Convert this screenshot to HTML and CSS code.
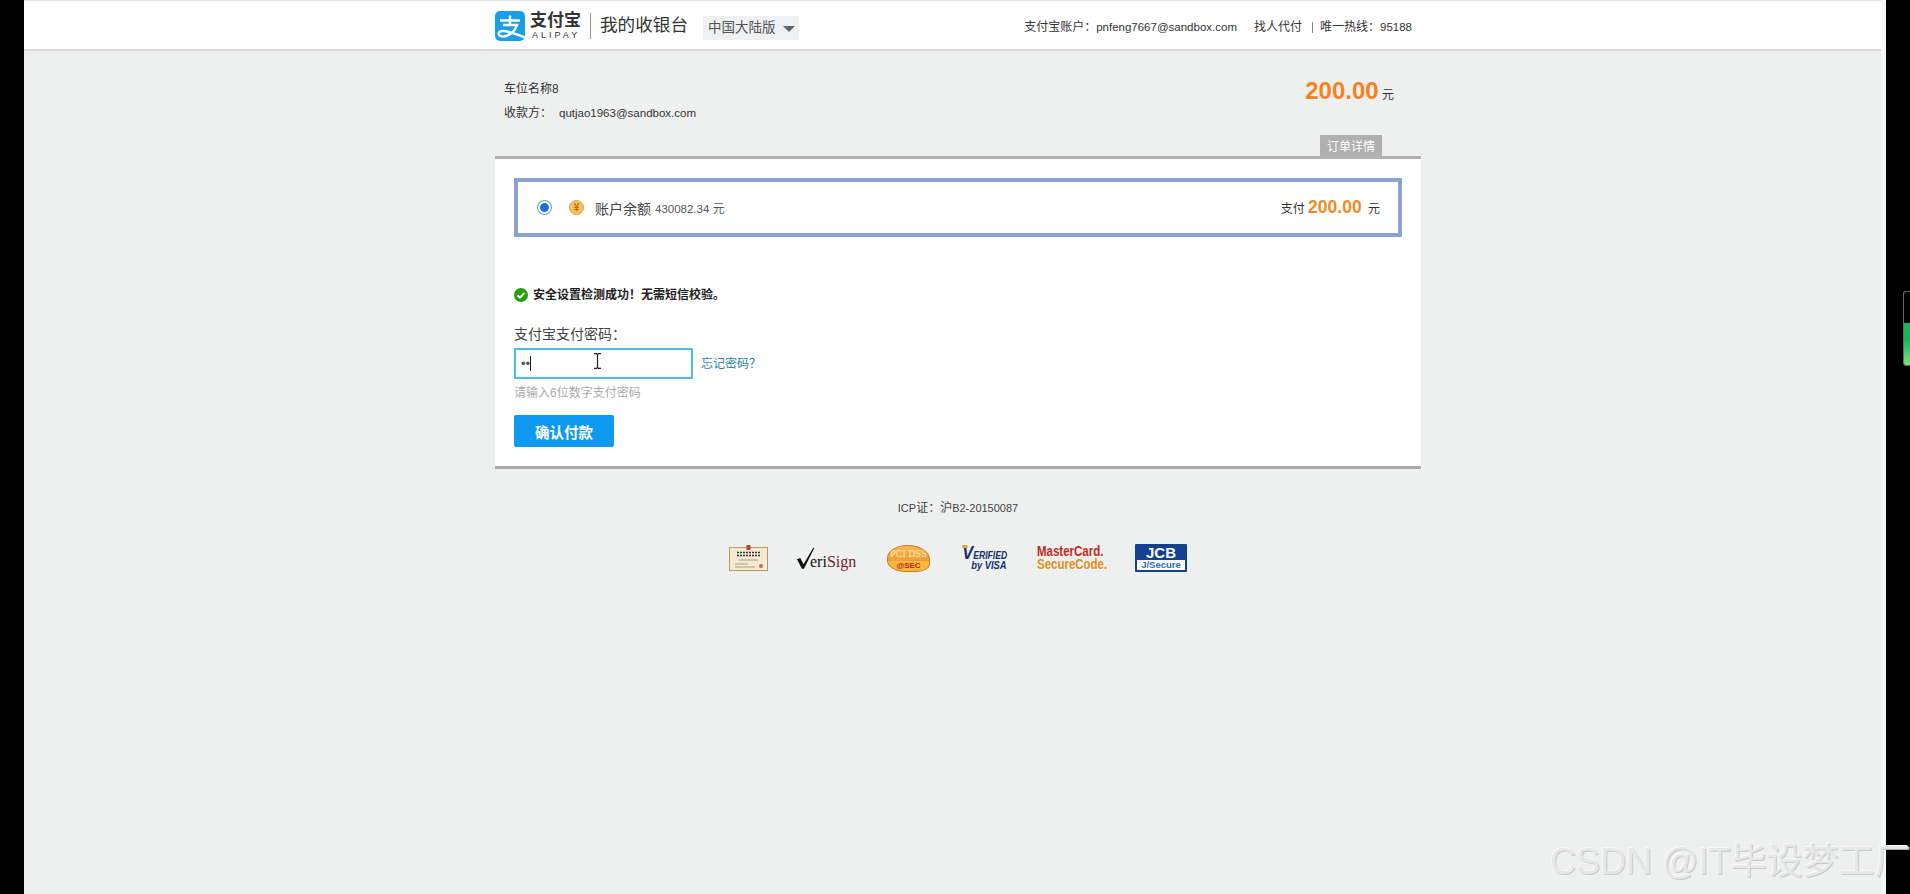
FILE: index.html
```html
<!DOCTYPE html>
<html lang="zh-CN">
<head>
<meta charset="utf-8">
<title>支付宝 我的收银台</title>
<link rel="stylesheet" href="styles.css">
</head>
<body>
<div class="screen">
  <header class="topbar">
    <div class="wrap topbar-in">
      <div class="brand">
        <svg class="logo" viewBox="0 0 30 30" aria-hidden="true">
          <rect width="30" height="30" rx="5" fill="#1a9fe6"/>
          <path d="M5 9.500h20M15 4.500v8.500M8 14h14c-2 6.500-8 11.500-14 11.500c-5.500 0-6-5.500-.5-5.500c6 0 13 2.500 22.500 6.500" fill="none" stroke="#fff" stroke-width="2.400"/>
        </svg>
        <div class="wordmark">
          <div class="wm-cn">支付宝</div>
          <div class="wm-en">ALIPAY</div>
        </div>
        <div class="brand-sep"></div>
        <div class="brand-title">我的收银台</div>
        <div class="region">中国大陆版<span class="caret"></span></div>
      </div>
      <div class="toplinks">
        <span>支付宝账户：<span class="lat">pnfeng7667@sandbox.com</span></span>
        <span class="find">找人代付</span>
        <span class="bar"></span>
        <span>唯一热线：<span class="lat">95188</span></span>
      </div>
    </div>
  </header>

  <main class="wrap">
    <section class="order">
      <div class="order-info">
        <div class="order-name">车位名称8</div>
        <div class="order-payee"><span class="payee-label">收款方：</span><span class="lat">qutjao1963@sandbox.com</span></div>
      </div>
      <div class="order-amount"><b>200.00</b> 元</div>
    </section>
    <div class="tabline"><span class="detail-tab">订单详情</span></div>

    <section class="card">
      <div class="pay-box">
        <div class="pay-left">
          <span class="radio"></span>
          <span class="coin">¥</span>
          <span class="pay-name">账户余额</span>
          <span class="pay-bal"><span class="lat">430082.34</span> 元</span>
        </div>
        <div class="pay-right">支付 <b>200.00</b> <span class="pay-unit">元</span></div>
      </div>

      <div class="secure">
        <svg class="check" viewBox="0 0 14 14" aria-hidden="true">
          <circle cx="7" cy="7" r="7" fill="#22a00e"/>
          <path d="M3.500 7.200l2.500 2.400l4.500-4.700" fill="none" stroke="#fff" stroke-width="2"/>
        </svg>
        <span>安全设置检测成功！无需短信校验。</span>
      </div>

      <div class="pw-label">支付宝支付密码：</div>
      <div class="pw-row">
        <div class="pw-input">
          <span class="dots">••</span><span class="text-caret"></span>
          <svg class="ibeam" viewBox="0 0 9 16" aria-hidden="true">
            <path d="M1 .7h2.500L4.500 1.500L5.500 .7H8M4.500 1.500v13M1 15.300h2.500l1-.8l1 .8H8" fill="none" stroke="#222" stroke-width="1.200"/>
          </svg>
        </div>
        <span class="forgot">忘记密码？</span>
      </div>
      <div class="pw-hint">请输入6位数字支付密码</div>
      <button class="confirm" type="button">确认付款</button>
    </section>

    <footer class="foot">
      <div class="icp"><span class="lat-sm">ICP</span>证：沪<span class="lat-sm">B2-20150087</span></div>
      <div class="badges">
        <div class="badge-cert">
          <svg viewBox="0 0 39 26" aria-hidden="true">
            <rect x=".5" y="2.500" width="38" height="23" fill="#f3ead2" stroke="#b89a62"/>
            <path d="M8 7.500h23M8 10.500h23" stroke="#333" stroke-width="1.400" stroke-dasharray="2 1"/>
            <path d="M10 15h19M6 19h13M6 22h20" stroke="#a99a80"/>
            <rect x="17.500" y="0" width="4" height="5" fill="#b5482c"/>
            <circle cx="32" cy="21" r="2" fill="#c46a50"/>
          </svg>
        </div>
        <div class="badge-vs">
          <svg class="vs-tick" viewBox="0 0 22 27" aria-hidden="true"><path d="M0 14.500l4-1.500l4 7.500L20 0l1 1L8.500 26H6z" fill="#111"/></svg>
          <span class="vs-e">eri</span><span class="vs-s">Sign</span>
        </div>
        <div class="badge-pci">
          <span class="pci-top">PCI DSS</span>
          <span class="pci-bot">@SEC</span>
        </div>
        <div class="badge-visa">
          <span class="v1"><span class="v-big">V</span>ERIFIED</span>
          <span class="v2">by VISA</span>
        </div>
        <div class="badge-mc"><span class="m1">MasterCard.</span><span class="m2">SecureCode.</span></div>
        <div class="badge-jcb"><span class="j1">JCB</span><span class="j2">J/Secure</span></div>
      </div>
    </footer>
  </main>
</div>
<div class="watermark">CSDN @IT毕设梦工厂</div>
<div class="side-meter"><span class="side-fill"></span></div>
</body>
</html>
```

FILE: styles.css
```css
* { box-sizing: border-box; }
html, body { margin: 0; height: 100%; }
body {
  background: #000;
  padding: 0 24px;
  overflow: hidden;
  position: relative;
  font-family: "Liberation Sans", "Noto Sans CJK SC", sans-serif;
  font-size: 12px;
  color: #333;
}
.lat { font-size: 11.500px; }
.lat-sm { font-size: 11px; }
.screen {
  height: 894px;
  background: #eef0ef;
  border-right: 5px solid #f6f7f7;
  position: relative;
  overflow: hidden;
}
.wrap { width: 926px; margin-left: 471px; }
.topbar {
  height: 51px;
  background: #fff;
  border-top: 1px solid #e2e2e2;
  border-bottom: 2px solid #dcdcdc;
}
.topbar-in { display: flex; justify-content: space-between; align-items: flex-start; }
.brand { display: flex; align-items: flex-start; padding-top: 10px; }
.logo { width: 30px; height: 30px; display: block; }
.wordmark { margin-left: 5px; width: 52px; color: #333; }
.wm-cn { font-size: 17px; line-height: 19px; font-weight: 700; white-space: nowrap; }
.wm-en { font-size: 9px; line-height: 10px; letter-spacing: 3px; margin-left: 2px; white-space: nowrap; }
.brand-sep { width: 1px; height: 26px; margin: 2px 0 0 8px; background: #999; }
.brand-title { margin-left: 9px; font-size: 17.600px; line-height: 28px; color: #333; width: 90px; white-space: nowrap; }
.region {
  margin: 5px 0 0 13px;
  width: 96px; height: 24px;
  background: #eef0f1;
  color: #555;
  font-size: 13.500px;
  line-height: 24px;
  padding-left: 5px;
  white-space: nowrap;
  display: flex;
  align-items: center;
}
.caret {
  margin: 2px 0 0 7px;
  width: 0; height: 0;
  border-left: 6px solid transparent;
  border-right: 6px solid transparent;
  border-top: 6px solid #5a6670;
}
.toplinks {
  display: flex;
  align-items: center;
  padding-top: 18px;
  margin-right: 9px;
  line-height: 16px;
  white-space: nowrap;
}
.find { margin-left: 17px; }
.bar { width: 1px; height: 11px; background: #888; margin: 0 7px 0 10px; }

.order { display: flex; justify-content: space-between; height: 84px; padding: 28px 27px 0 9px; }
.order-name { line-height: 20px; }
.order-payee { line-height: 20px; margin-top: 4px; }
.payee-label { display: inline-block; width: 55px; }
.order-amount { margin-top: -3px; color: #333; font-size: 12px; line-height: 30px; }
.order-amount b { color: #f58220; font-size: 24px; }

.tabline { height: 21px; display: flex; justify-content: flex-end; padding-right: 39px; }
.detail-tab {
  width: 62px; height: 21px;
  background: #b0b0b0;
  color: #fff;
  text-align: center;
  line-height: 24px;
}

.card {
  height: 313px;
  background: #fff;
  border-top: 3px solid #b0b0b0;
  border-bottom: 3px solid #a8a8a8;
  padding: 19px 19px 0;
}
.pay-box {
  height: 59px;
  width: 888px;
  border: 4px solid #8aa3cf;
  display: flex;
  justify-content: space-between;
  align-items: center;
  padding: 0 18px 0 20px;
}
.pay-left { display: flex; align-items: center; }
.radio {
  width: 13px; height: 13px;
  border-radius: 50%;
  background: #1a73dc;
  border: 2px solid #fff;
  box-shadow: 0 0 0 1px #6a9ad6;
}
.coin {
  margin-left: 18px;
  width: 15px; height: 15px;
  border-radius: 50%;
  background: #f7c35f;
  border: 1px solid #e89a35;
  color: #bd6c18;
  font-size: 10px;
  font-weight: 700;
  line-height: 13px;
  text-align: center;
}
.pay-name { margin-left: 11px; font-size: 14px; color: #444; }
.pay-bal { margin-left: 4px; color: #555; }
.pay-right { color: #333; }
.pay-right b { color: #f08a24; font-size: 17.500px; }
.pay-unit { margin-left: 3px; }

.secure { display: flex; align-items: center; margin-top: 50px; font-weight: 700; color: #222; line-height: 16px; }
.check { width: 14px; height: 14px; margin-right: 5px; }
.pw-label { margin-top: 21px; font-size: 14px; line-height: 20px; color: #444; }
.pw-row { display: flex; align-items: center; margin-top: 4px; }
.pw-input {
  width: 179px; height: 31px;
  background: #fff;
  border: 2px solid #4dbde0;
  padding-left: 5px;
  display: flex;
  align-items: center;
  position: relative;
}
.dots { font-size: 13px; color: #555; }
.text-caret { width: 1px; height: 15px; background: #222; }
.ibeam { position: absolute; left: 77px; top: 3px; width: 9px; height: 16px; }
.forgot { margin: 0 0 3px 8px; color: #1f7f9f; }
.pw-hint { margin-top: 6px; color: #aaa; line-height: 16px; }
.confirm {
  display: block;
  margin-top: 14px;
  width: 100px; height: 32px;
  border: 0;
  border-radius: 2px;
  background: #0e9bef;
  color: #fff;
  font: 700 14.500px "Liberation Sans", "Noto Sans CJK SC", sans-serif;
}

.foot { text-align: center; padding-top: 31px; }
.icp { line-height: 16px; color: #444; }
.badges {
  display: flex;
  align-items: center;
  margin: 27px 0 0 234px;
  height: 30px;
  text-align: left;
}
.badge-cert { width: 39px; height: 26px; }
.badge-cert svg { width: 39px; height: 26px; display: block; }
.badge-vs {
  margin-left: 29px; width: 60px; height: 27px;
  display: flex; align-items: flex-end;
  font: 16px/21px "Liberation Serif", serif;
}
.vs-tick { width: 18px; height: 27px; flex: none; margin-right: -5px; }
.vs-e { color: #111; }
.vs-s { color: #6e1f2c; }
.badge-pci {
  margin-left: 30px;
  width: 43px; height: 27px;
  border-radius: 55% 60% 35% 50%;
  background: linear-gradient(#f6bb55, #ea8a20);
  border: 1px solid #d5771c;
  display: flex; flex-direction: column; align-items: center;
  overflow: hidden;
  color: #ffeab8;
}
.pci-top { font: 10px/15px "Liberation Serif", serif; white-space: nowrap; }
.pci-bot { width: 100%; text-align: center; font: 700 8px/10px "Liberation Sans", sans-serif; color: #b5261a; background: #f4b83e; }
.badge-visa {
  margin-left: 31px; width: 46px; height: 24px;
  display: flex; flex-direction: column; align-items: flex-end;
  font-weight: 700; font-style: italic;
  color: #14306f;
  white-space: nowrap;
}
.v1 { position: relative; height: 13px; font-size: 10px; line-height: 14px; transform: scaleX(.86); transform-origin: right; }
.v-big { font-size: 19px; line-height: 14px; }
.v-big::before {
  content: "";
  position: absolute;
  left: 0; top: -1px;
  width: 6px; height: 3px;
  background: #e6a92f;
}
.v2 { font-size: 11px; line-height: 12px; transform: scaleX(.85); transform-origin: right; }
.badge-mc {
  margin-left: 30px; width: 69px;
  display: flex; flex-direction: column; align-items: flex-start;
  font-weight: 700; line-height: 13.500px; font-size: 14px;
  white-space: nowrap;
}
.m1, .m2 { transform: scaleX(.82); transform-origin: left; }
.m1 { color: #c5281c; }
.m2 { color: #e09020; }
.badge-jcb {
  margin-left: 29px; width: 52px; height: 28px;
  background: #14418f;
  border: 2px solid #14418f;
  border-radius: 1px;
  display: flex; flex-direction: column; align-items: center;
  color: #fff;
  font-weight: 700;
}
.j1 { font-size: 15px; line-height: 14px; }
.j2 { width: 100%; background: #fff; color: #1f6fb5; font-size: 9.500px; line-height: 10px; text-align: center; }

.watermark {
  position: absolute;
  left: 1550px;
  top: 844px;
  font: 36px/36px "Liberation Sans", "Noto Sans CJK SC", sans-serif;
  color: #e6e7e7;
  text-shadow: 1px 1px 0 #c9caca, -1px -1px 0 #fafafa;
  white-space: nowrap;
}
.side-meter {
  position: absolute;
  left: 1903px; top: 291px;
  width: 7px; height: 75px;
  border: 1px solid #666;
  border-right: 0;
  border-radius: 3px 0 0 3px;
  overflow: hidden;
}
.side-fill {
  position: absolute; left: 0; right: 0; bottom: 0; height: 42px;
  background: linear-gradient(#12b75a 40%, #7be47f);
}
```
